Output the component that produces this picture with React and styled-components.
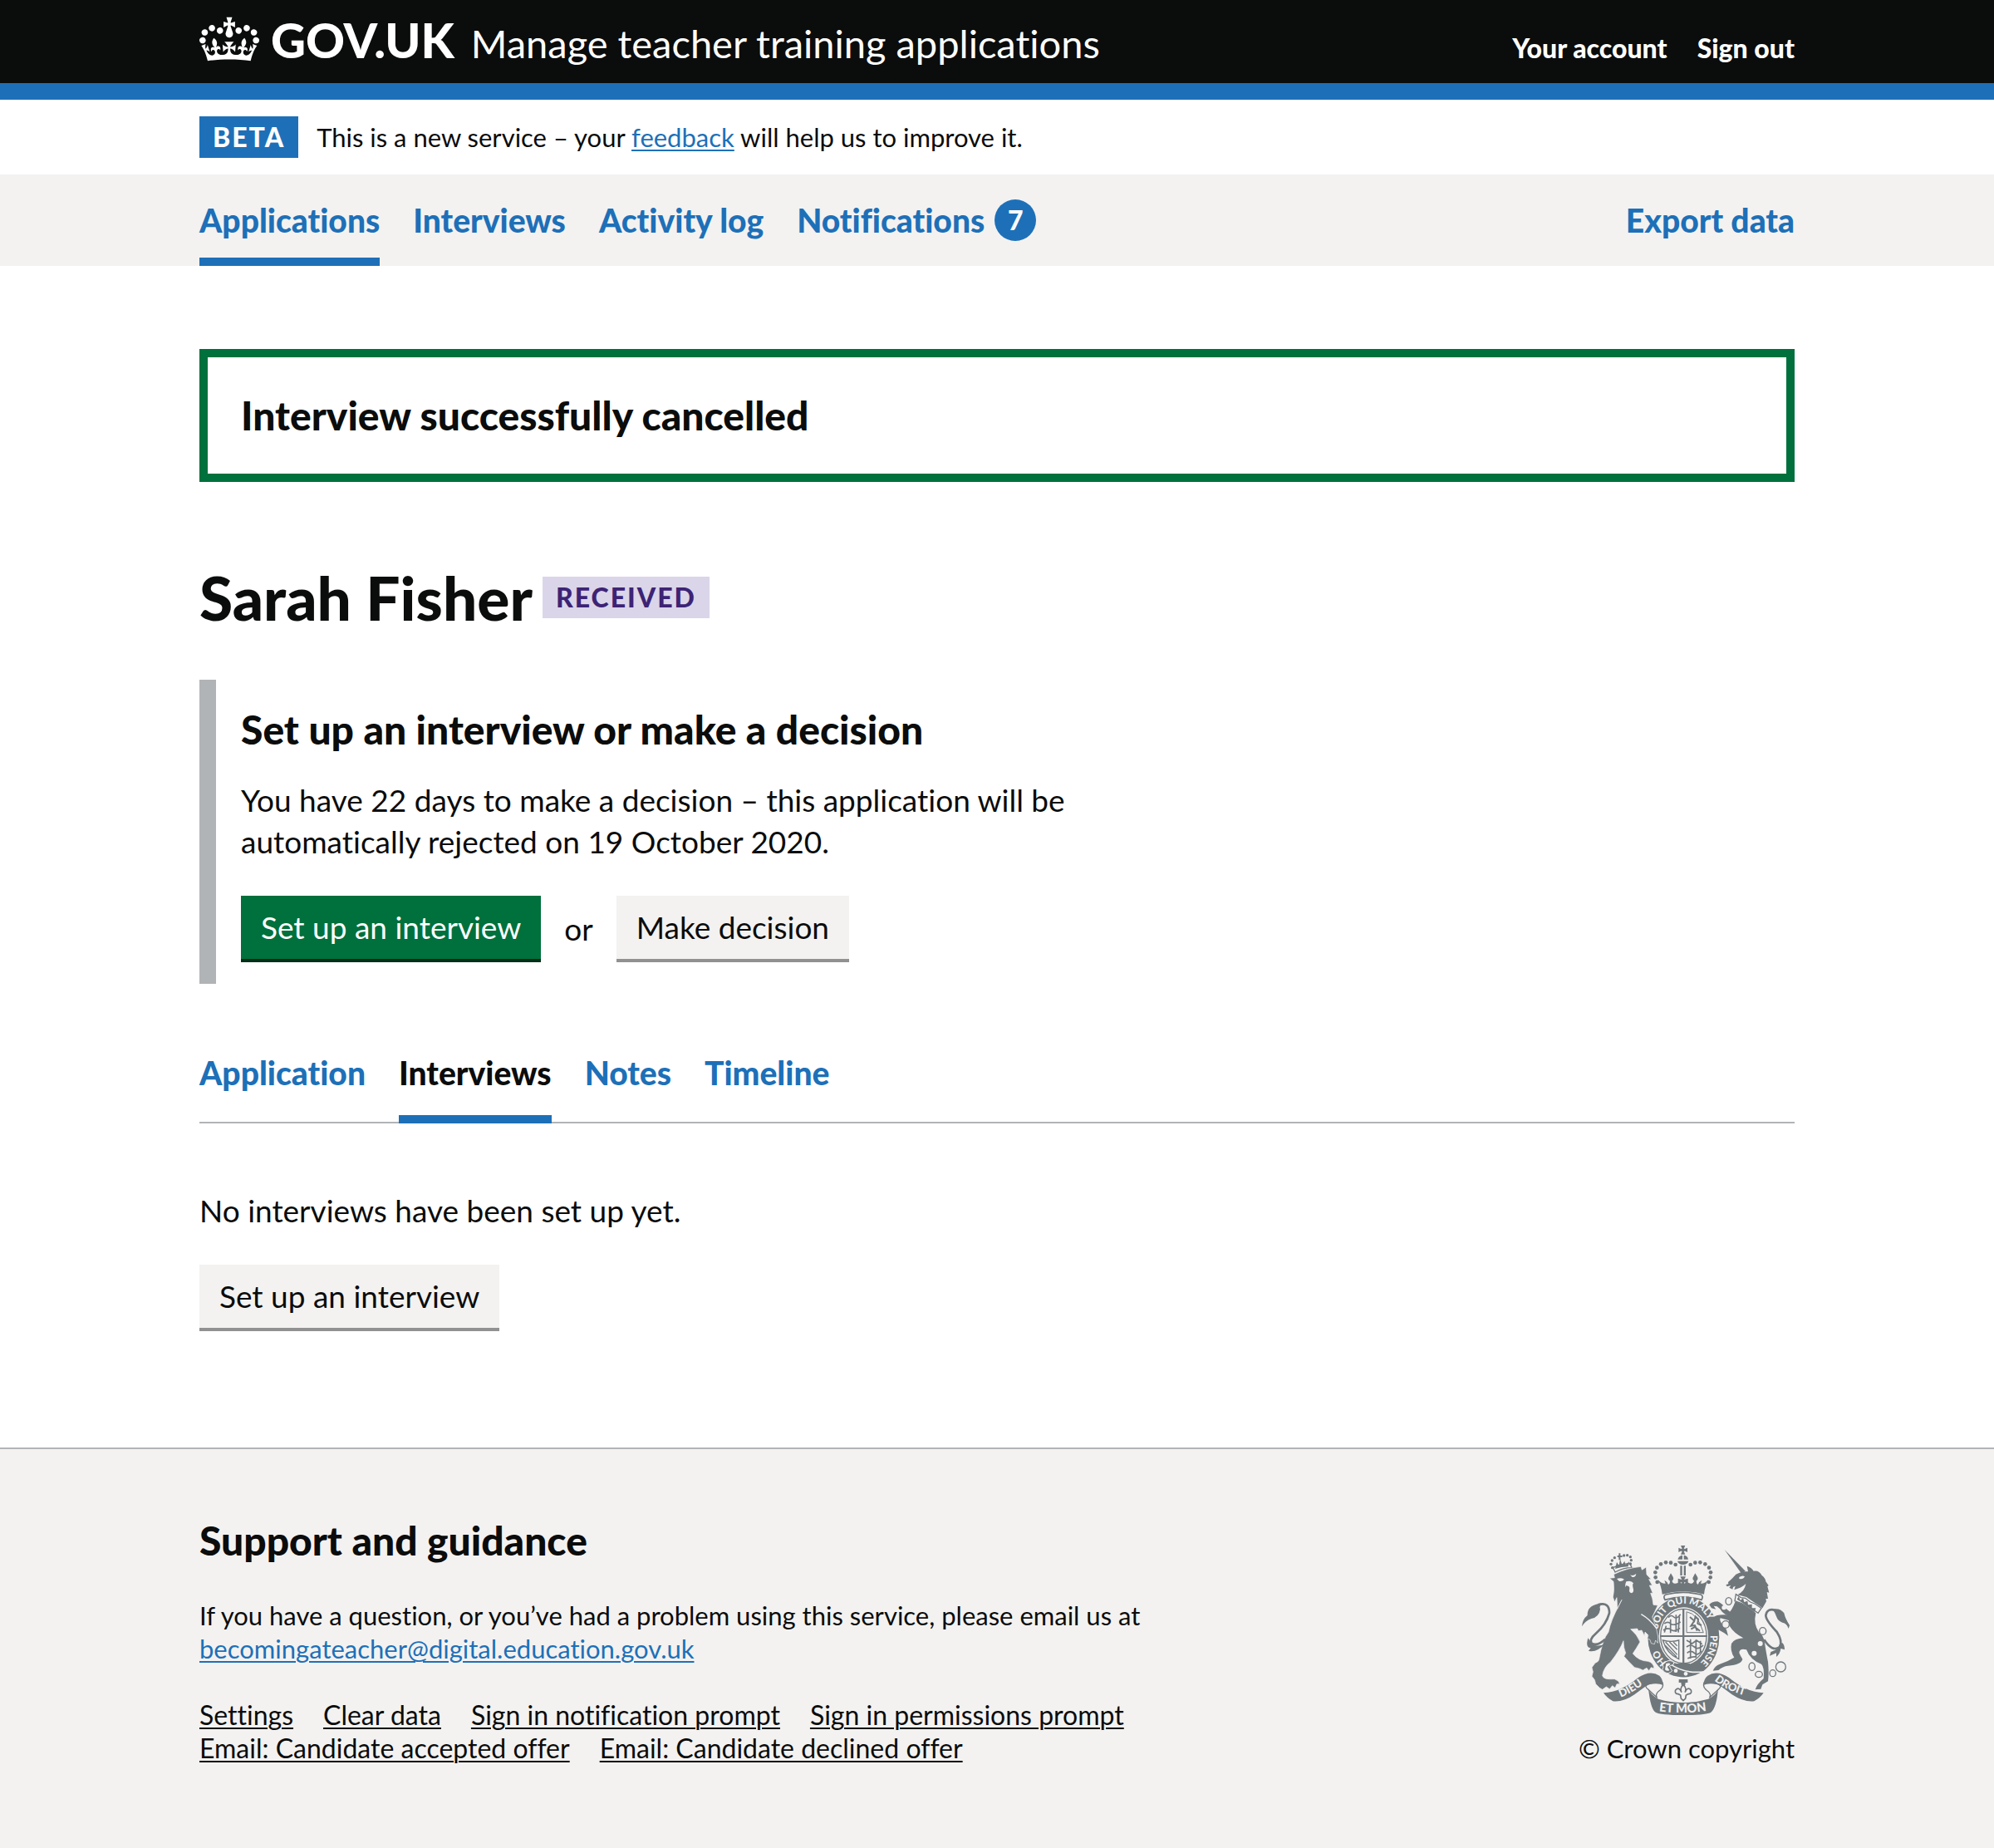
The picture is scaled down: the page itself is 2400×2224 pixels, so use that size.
import React from "react";
import styled, { createGlobalStyle, css } from "styled-components";

const c = {
  black: "#0b0c0c",
  blue: "#1d70b8",
  green: "#00703c",
  greenShadow: "#002d18",
  grey1: "#6f777b",
  grey2: "#b1b4b6",
  grey3: "#f3f2f1",
  buttonShadow: "#929191",
  purple: "#3d2375",
  purpleTint: "#dbd5e9",
  white: "#ffffff",
};

const small = css`
  font-size: 31px;
  line-height: 40px;
`;
const smallBold = css`
  font-size: 32px;
  line-height: 40px;
  font-weight: 900;
`;
const body = css`
  font-size: 37px;
  line-height: 50px;
`;
const bodyBold = css`
  font-size: 39px;
  line-height: 50px;
  font-weight: 900;
`;

const GlobalStyle = createGlobalStyle`
  *, *::before, *::after { box-sizing: border-box; }
  body {
    margin: 0;
    background: ${c.grey3};
    color: ${c.black};
    font-family: Lato, Roboto, "Liberation Sans", sans-serif;
    font-variant-ligatures: none;
  }
  h1, h2, p, ul { margin: 0; padding: 0; }
  ul { list-style: none; }
`;

const Page = styled.div`
  background: ${c.white};
`;

const Container = styled.div`
  max-width: 1920px;
  margin: 0 auto;
`;

const Header = styled.header`
  background: ${c.black};
  border-bottom: 20px solid ${c.blue};
`;

const HeaderRow = styled(Container)`
  display: flex;
  align-items: baseline;
  justify-content: space-between;
  height: 100px;
  padding-top: 10px;
`;

const Brand = styled.div`
  display: flex;
  align-items: baseline;
  gap: 20px;
`;

const LogoLink = styled.a`
  display: flex;
  align-items: baseline;
  gap: 14px;
  color: ${c.white};
  font-size: 58px;
  line-height: 76px;
  font-weight: 900;
  text-decoration: none;
`;

const Crown = styled.svg`
  width: 72px;
  height: 53px;
  margin-bottom: -4px;
  overflow: visible;
`;

const ServiceLink = styled.a`
  font-size: 47px;
  line-height: 60px;
  color: ${c.white};
  text-decoration: none;
`;

const AccountList = styled.ul`
  display: flex;
  gap: 36px;
`;

const AccountLink = styled.a`
  ${smallBold}
  color: ${c.white};
  text-decoration: none;
`;

const PhaseBanner = styled(Container)`
  display: flex;
  align-items: center;
  gap: 22px;
  padding: 20px 0;
`;

const Tag = styled.strong`
  display: inline-flex;
  align-items: center;
  justify-content: center;
  height: 50px;
  padding: 0 16px;
  background: ${(p) => p.$bg};
  color: ${(p) => p.$fg};
  ${smallBold}
  letter-spacing: 2px;
  text-transform: uppercase;
`;

const SmallText = styled.p`
  ${small}
`;

const Link = styled.a`
  color: ${(p) => (p.$dark ? c.black : c.blue)};
  text-decoration: underline;
  text-decoration-thickness: 2px;
  text-underline-offset: 3px;
`;

const PrimaryNav = styled.nav`
  background: ${c.grey3};
`;

const NavRow = styled(Container)`
  display: flex;
  justify-content: space-between;
`;

const NavList = styled.ul`
  display: flex;
  gap: 40px;
`;

const NavLink = styled.a`
  display: flex;
  align-items: center;
  gap: 12px;
  height: 110px;
  border-top: 10px solid transparent;
  border-bottom: 10px solid ${(p) => (p.$active ? c.blue : "transparent")};
  color: ${c.blue};
  ${bodyBold}
  text-decoration: none;
`;

const Count = styled.span`
  display: flex;
  align-items: center;
  justify-content: center;
  width: 50px;
  height: 50px;
  border-radius: 50%;
  background: ${c.blue};
  color: ${c.white};
  ${smallBold}
`;

const Main = styled.main`
  padding: 100px 0 140px;
`;

const SuccessBanner = styled.div`
  padding: 40px;
  border: 10px solid ${c.green};
`;

const Heading = styled.h2`
  font-size: 48px;
  line-height: 60px;
  font-weight: 900;
`;

const TitleRow = styled.div`
  display: flex;
  align-items: center;
  gap: 12px;
  margin: 100px 0 60px;
`;

const Title = styled.h1`
  font-size: 73px;
  line-height: 78px;
  font-weight: 900;
`;

const Inset = styled.section`
  max-width: 1140px;
  padding: 30px 30px 26px;
  border-left: 20px solid ${c.grey2};
`;

const Text = styled.p`
  ${body}
  margin: 30px 0 40px;
`;

const Actions = styled.div`
  display: flex;
  align-items: center;
  gap: 28px;
  ${body}
`;

const Button = styled.button`
  height: 80px;
  padding: 0 24px;
  border: 0;
  border-bottom: 4px solid ${(p) => (p.$primary ? c.greenShadow : c.buttonShadow)};
  background: ${(p) => (p.$primary ? c.green : c.grey3)};
  color: ${(p) => (p.$primary ? c.white : c.black)};
  font-family: inherit;
  font-variant-ligatures: none;
  ${body}
  cursor: pointer;
`;

const Tabs = styled.nav`
  margin: 70px 0 80px;
  box-shadow: inset 0 -2px 0 ${c.grey2};
`;

const TabLink = styled.a`
  display: block;
  height: 98px;
  padding-top: 12px;
  border-bottom: 10px solid ${(p) => (p.$active ? c.blue : "transparent")};
  color: ${(p) => (p.$active ? c.black : c.blue)};
  ${bodyBold}
  text-decoration: none;
`;

const Footer = styled.footer`
  border-top: 2px solid ${c.grey2};
  background: ${c.grey3};
`;

const FooterRow = styled(Container)`
  display: flex;
  align-items: flex-end;
  justify-content: space-between;
  padding: 80px 0 100px;
`;

const FooterText = styled.p`
  ${small}
  margin: 40px 0;
`;

const FooterLinks = styled.ul`
  display: flex;
  flex-wrap: wrap;
  column-gap: 36px;
  max-width: 1180px;
  font-size: 32px;
  line-height: 40px;
`;

const Copyright = styled.a`
  display: flex;
  flex-direction: column;
  align-items: flex-end;
  gap: 20px;
  ${small}
  color: ${c.black};
  text-decoration: none;
`;

const Arms = styled.svg`
  width: 250px;
  height: 204px;
  margin-right: 6px;
`;

const CROWN_PATH =
  "M25 30.2c3.5 1.5 7.7-.2 9.1-3.7 1.5-3.6-.2-7.8-3.9-9.2-3.6-1.4-7.6.3-9.1 3.9-1.4 3.5.3 7.5 3.9 9zM9 39.5c3.6 1.5 7.8-.2 9.2-3.7 1.5-3.6-.2-7.8-3.9-9.1-3.6-1.5-7.6.2-9.1 3.8-1.4 3.5.3 7.5 3.8 9zM4.4 57.2c3.5 1.5 7.7-.2 9.1-3.8 1.5-3.6-.2-7.7-3.9-9.1-3.5-1.5-7.6.3-9.1 3.8-1.4 3.5.3 7.6 3.9 9.1zm38.3-21.4c3.5 1.5 7.7-.2 9.1-3.8 1.5-3.6-.2-7.7-3.9-9.1-3.6-1.5-7.6.3-9.1 3.8-1.3 3.6.4 7.7 3.9 9.1zm64.4-5.6c-3.6 1.5-7.8-.2-9.1-3.7-1.5-3.6.2-7.8 3.8-9.2 3.6-1.4 7.7.3 9.2 3.9 1.3 3.5-.4 7.5-3.9 9zm15.9 9.3c-3.6 1.5-7.7-.2-9.1-3.7-1.5-3.6.2-7.8 3.7-9.1 3.6-1.5 7.7.2 9.2 3.8 1.5 3.5-.3 7.5-3.8 9zm4.7 17.7c-3.6 1.5-7.8-.2-9.2-3.8-1.5-3.6.2-7.7 3.9-9.1 3.6-1.5 7.7.3 9.2 3.8 1.3 3.5-.4 7.6-3.9 9.1zM89.3 35.8c-3.6 1.5-7.8-.2-9.2-3.8-1.4-3.6.2-7.7 3.9-9.1 3.6-1.5 7.7.3 9.2 3.8 1.4 3.6-.3 7.7-3.9 9.1zM69.7 17.7l8.9 4.7V9.3l-8.9 2.8c-.2-.3-.5-.6-.9-.9L72.4 0H59.6l3.5 11.2c-.3.3-.6.5-.9.9l-8.8-2.8v13.1l8.8-4.7c.3.3.6.7.9.9l-5 15.4v.1c-.2.8-.4 1.6-.4 2.4 0 4.1 3.1 7.5 7 8.1h.2c.3 0 .7.1 1 .1.4 0 .7 0 1-.1h.2c4-.6 7.1-4.1 7.1-8.1 0-.8-.1-1.7-.4-2.4V34l-5.1-15.4c.4-.2.7-.6 1-.9zM66 92.8c16.9 0 32.8 1.1 47.1 3.2 4-16.9 8.9-26.7 14-33.5l-9.6-3.4c1 4.9 1.1 7.2 0 10.2-1.5-1.4-3-4.3-4.2-8.7L108.6 76c2.8-2 5-3.2 7.5-3.3-4.4 9.4-10 11.9-13.6 11.2-4.3-.8-6.3-4.6-5.6-7.9 1-4.7 5.7-5.9 8-.5 4.3-8.7-3-11.4-7.6-8.8 7.1-7.2 7.9-13.5 2.1-21.1-8 6.1-8.1 12.3-4.5 20.8-4.7-5.4-12.1-2.5-9.5 6.2 3.4-5.2 7.9-2 7.2 3.1-.6 4.3-6.4 7.8-13.5 7.2-10.3-.9-10.9-8-11.2-13.8 2.5-.5 7.1 1.8 11 7.3L80.2 60c-4.1 4.4-8 5.3-12.3 5.4 1.4-4.4 8-11.6 8-11.6H55.5s6.4 7.2 7.9 11.6c-4.2-.1-8-1-12.3-5.4l1.4 16.4c3.9-5.5 8.5-7.7 10.9-7.3-.3 5.8-.9 12.8-11.1 13.8-7.2.6-12.9-2.9-13.5-7.2-.7-5 3.8-8.3 7.1-3.1 2.7-8.7-4.6-11.6-9.4-6.2 3.7-8.5 3.6-14.7-4.6-20.8-5.8 7.6-5 13.9 2.2 21.1-4.7-2.6-11.9.1-7.7 8.8 2.3-5.5 7.1-4.2 8.1.5.7 3.3-1.3 7.1-5.7 7.9-3.5.7-9-1.8-13.5-11.2 2.5.1 4.7 1.3 7.5 3.3l-4.7-15.4c-1.2 4.4-2.7 7.2-4.3 8.7-1.1-3-.9-5.3 0-10.2l-9.5 3.4c5 6.9 9.9 16.7 14 33.5 14.8-2.1 30.8-3.2 47.7-3.2z";

const crownBeads = [
  [344, 192], [338, 175], [337, 157], [343, 140], [357, 127], [375, 121], [393, 122], [410, 129],
  [530, 192], [536, 175], [537, 157], [531, 140], [517, 127], [499, 121], [481, 122], [464, 129],
];

const lionBeads = [
  [182, 140], [177, 127], [181, 114], [190, 104], [224, 96], [236, 95], [247, 101], [250, 113], [247, 126],
];

const chainLinks = [
  [602, 261, 11, 13], [591, 345, 13, 13], [725, 369, 12, 13], [686, 497, 11, 14],
  [711, 525, 13, 11], [761, 521, 11, 12], [790, 498, 18, 18],
];

function RoyalArms() {
  const dark = c.grey1;
  const light = c.grey3;
  return (
    <Arms viewBox="72 60 750 612" aria-hidden="true" fill={dark}>
      <defs>
        <path id="garterTop" d="M346 362A98 113 0 0 1 540 372" />
        <path id="garterRight" d="M536 384A98 113 0 0 1 480 496" />
        <path id="garterLeft" d="M378 482A98 113 0 0 1 341 400" />
        <path id="dieuLine" d="M212 608Q260 590 314 546" />
        <path id="droitLine" d="M550 547Q598 588 686 608" />
        <path id="monLine" d="M350 658Q438 670 528 656" />
      </defs>

      {/* imperial crown */}
      <path d="M429 60h16l-5 11h-6zM429 92h16l-5-11h-6zM421 68v16l11-5v-6zM453 68v16l-11-5v-6zM432 71h10v10h-10z" />
      <path d="M418 110q4-14 17-15v15zM440 95q14 1 16 15h-16zM417 116h40q-3 12-20 13-17-1-20-13z" />
      {crownBeads.map(([x, y]) => (
        <circle key={`${x}-${y}`} cx={x} cy={y} r="7" />
      ))}
      <path d="M427 133h7v35h-7zM440 133h7v35h-7z" />
      <path d="M427 172h20l-6 11 14-4v18l-14-5 3 14h-14l3-14-14 5v-18l14 4z" />
      <path d="M362 236q-3-30-16-54 12 16 28 15l-4-12q11 5 14 16 8-4 5-14-8-5-3-14l7-13 8 13q4 9-3 14 0 11 12 10 14-3 14-6l13 10 14-10q2 3 14 6 10 1 12-10-8-5-3-14l7-13 8 13q4 9-3 14-2 10 5 14 3-11 14-16l-4 12q16 1 28-15-13 24-16 54-74-20-150 0z" />
      <path d="M372 256q-8-14 3-19 62-16 126 0 11 5 3 19-66-20-132 0z" fill={light} stroke={dark} strokeWidth="5" />

      {/* garter and shield */}
      <ellipse cx="439" cy="391" rx="129" ry="147" />
      <ellipse cx="439" cy="387" rx="89" ry="104" fill={light} />
      <ellipse cx="439" cy="387" rx="83" ry="98" fill="none" stroke={dark} strokeWidth="4" />
      <path d="M435 288h7v200h-7zM354 384h170v6H354zM412 486h50l4 12h-58z" />
      <g fill="none" stroke={dark} strokeWidth="5">
        <path d="M384 320q10-12 20-2t24-10M370 342q12-10 22 0t36-6M366 366q16-12 28-2t32-6M392 326v50M412 310v62M376 350l-6 24M424 316l-4 58" />
        <path d="M450 298v76h62M452 300q38 6 58 72" strokeWidth="3" />
        <path d="M462 318l16 14 4-16 10 10-2 16 14 6M478 332l-12 18 14-2 8 20M466 362l14-8 18 14" strokeWidth="6" />
        <path d="M450 402l20 12 16-12 20 14M450 426q14-12 28 0t32-6M452 448q14-12 26 0t26-8M454 468q12-8 30-6M464 398v70M484 400v66M500 404v44" />
        <path d="M364 402q30 8 58 0v68q-44-20-58-68zM374 408l42 46M388 408l28 28M372 420l42 42M402 408l14 14" strokeWidth="4" />
      </g>
      <path d="M386 484q54 40 124 32-44 28-92 20-34-6-50-22 14-8 18-30z" stroke={light} strokeWidth="5" />
      <path d="M384 476q20-2 20 12l-16 8 10 16q-12 14-26 6-14-10-6-18-8-18 18-24z" stroke={light} strokeWidth="3" />
      <path d="M376 486q12-4 16 2l-12 10 8 12q-8 6-16-2z" fill={light} />
      <circle cx="411" cy="512" r="7" fill={light} />
      <circle cx="447" cy="523" r="7" fill={light} />
      <g fill={light} fontFamily="Lato, sans-serif" fontWeight="900" fontSize="35">
        <text><textPath href="#garterTop">SOIT QUI MALY</textPath></text>
        <text><textPath href="#garterRight">PENSE</textPath></text>
        <text><textPath href="#garterLeft">HO</textPath></text>
      </g>

      {/* lion */}
      <path d="M192 156l-8-16q32-16 62-14l6 14q-30 0-60 16z" fill={light} stroke={dark} strokeWidth="4" />
      <path d="M192 144l6-24 8 12 4-24 7 22 9-14 3 14 14-12-4 18q-24 0-47 8z" />
      <path d="M200 96h5v-8h6v8h7v6h-7v10h-6v-10h-5z" />
      {lionBeads.map(([x, y]) => (
        <circle key={`${x}-${y}`} cx={x} cy={y} r="5" />
      ))}
      <path
        d="M172 178L190 176L187 164Q232 142 285 136L289 148L304 138L306 165L322 182L314 182L326 204L316 204L328 232L320 232Q328 250 330 274L346 276L326 318Q342 350 347 390L346 412L338 402L334 416L322 413L318 400L308 396L312 384L300 372L298 386L288 366L276 368L272 360L248 362Q272 382 282 408Q268 432 256 450Q276 476 310 478Q330 482 333 504L322 500L314 512L306 502L292 510Q284 504 262 500L240 478L224 460L230 448Q222 430 222 404Q210 436 176 480Q150 500 146 530Q150 545 190 542Q208 548 208 560L198 560L192 574L182 566L172 578L160 570L146 580L136 574L122 560L118 545L108 532L112 516L108 500L120 484Q134 478 134 470Q146 400 168 372Q176 330 208 272L216 256L200 288L198 248L190 264L184 246Q190 222 186 190Z"
        stroke={light}
        strokeWidth="2"
      />
      <path d="M198 180q14-5 27 2-10 10-19 6zM246 166q10 6 22-4-2 14-14 12zM232 190q18-6 26 6-6 6-2 14 6 18-4 22-12-2-8-16 2-10-14-12 4 2-2 6 0-12 4-20z" fill={light} />
      <path d="M286 308q32 18 56 52" fill="none" stroke={light} strokeWidth="4" />
      <path d="M130 274Q172 262 171 304Q160 345 122 378Q96 400 108 414Q128 424 156 398" fill="none" stroke={dark} strokeWidth="8" />
      <path d="M72 352Q74 326 92 312Q90 272 150 268Q132 278 138 290Q134 318 106 324Q84 332 72 352Z" />
      <path d="M94 394Q84 430 104 430L96 440Q124 448 154 416Q120 430 104 408Z" />

      {/* unicorn */}
      <path d="M587 75L663 153L647 160Z" />
      <path d="M602 206l-2-14q20-18 28-28 24-12 44-10l-4-20q16 4 24 18 20-4 30 16 12 8 14 22l10 14-4 4 6 22-8-2 4 24-8 0 2 10-14 24-58-40-32-8q26-14 30-40-14 14-42 22l4-14-8 4-2 8-12-6 6-8-14 4-4-6 10-4z" />
      <path d="M640 174q12-8 20-2-6 12-20 8z" fill={light} />
      <path d="M626 262Q670 276 700 304Q690 345 712 374Q728 384 732 410Q736 440 744 480Q748 520 744 550L724 562L718 578L698 580Q704 560 728 540Q732 500 720 488Q680 474 666 436Q640 430 640 448Q646 462 652 470Q648 490 600 494Q580 496 565 510L545 512Q552 494 570 488Q600 478 622 464Q606 440 612 414Q622 396 655 394Q620 376 606 352Q600 340 602 330L572 322Q566 330 584 352L594 364L600 386L586 376L562 362Q548 340 546 320Q556 308 596 310Q614 296 626 262Z" />
      <path d="M532 274Q540 262 562 262Q580 270 588 284L608 300L600 312Q580 306 572 290L560 280L548 278L556 290L540 286Z" />
      <path d="M628 236l18 12 16 2 18 14 16 6 24 16-12 18q-40-30-84-44z" fill={light} stroke={dark} strokeWidth="4" />
      <path d="M632 254l6-10 6 14 10-8 4 14 12-4 2 14 14-2 0 14 14 0-4 14q-30-26-64-46z" />
      <path d="M730 400Q760 446 786 426Q798 406 776 372Q736 330 736 312Q740 284 772 294" fill="none" stroke={dark} strokeWidth="8" />
      <path d="M760 290q28-6 42 14 4 20 20 44-2 6-4 12-6-20-22-22-16-4-22-22-4-14-14-26zM794 410q10 6 10 26l-14-4q-2 18-16 30l0-14-24 10 4-14q30-10 40-34z" />
      {chainLinks.map(([x, y, rx, ry]) => (
        <ellipse key={`${x}-${y}`} cx={x} cy={y} rx={rx} ry={ry} fill={light} stroke={dark} strokeWidth="4" />
      ))}
      <circle cx="716" cy="414" r="9" fill={light} />
      <circle cx="694" cy="449" r="9" fill={light} />
      <circle cx="585" cy="284" r="8" fill={light} />

      {/* motto scroll */}
      <path d="M310 578q-16-12 4-18 20-8 48-6 8 16-8 28-20 14-10 28zM566 578q14-12-4-18-20-8-48-6-8 16 8 28 20 14 10 28z" fill={light} stroke={dark} strokeWidth="4" />
      <path d="M150 592Q212 590 274 538Q318 508 352 530Q362 538 366 564Q344 554 314 562Q298 570 262 598Q222 626 184 622Q162 610 150 592ZM728 592Q666 590 604 538Q560 508 526 530Q514 538 510 564Q532 554 562 562Q578 570 614 598Q656 626 694 622Q716 610 728 592Z" />
      <path d="M312 576q8 24 36 38 90 26 180 0 30-14 36-38-6 70-26 86-16 10-100 10t-100-10q-18-10-26-86z" />
      <g fill={light} fontFamily="Lato, sans-serif" fontWeight="900" fontSize="39">
        <text><textPath href="#dieuLine">DIEU</textPath></text>
        <text><textPath href="#droitLine">DROIT</textPath></text>
        <text fontSize="44"><textPath href="#monLine">ET MON</textPath></text>
      </g>
      <path d="M422 543h32v12h-8l-2 12h-12l-2-12h-8z" />
      <path d="M438 562q14 14 6 28 10-22 22-8 4 14-10 14l-8 4-2 12-8 8-8-8-2-12-8-4q-14 0-10-14 12-14 22 8-8-14 6-28z" fill={light} stroke={dark} strokeWidth="5" />
    </Arms>
  );
}

const primaryItems = [
  { label: "Applications", active: true },
  { label: "Interviews" },
  { label: "Activity log" },
  { label: "Notifications", count: 7 },
];

const tabs = ["Application", "Interviews", "Notes", "Timeline"];

const footerLinks = [
  "Settings",
  "Clear data",
  "Sign in notification prompt",
  "Sign in permissions prompt",
  "Email: Candidate accepted offer",
  "Email: Candidate declined offer",
];

export default function App() {
  return (
    <Page>
      <GlobalStyle />
      <Header>
        <HeaderRow>
          <Brand>
            <LogoLink href="#home">
              <Crown viewBox="0 -7 132 97" aria-hidden="true">
                <path fill="currentColor" fillRule="evenodd" d={CROWN_PATH} />
              </Crown>
              GOV.UK
            </LogoLink>
            <ServiceLink href="#service">Manage teacher training applications</ServiceLink>
          </Brand>
          <AccountList>
            <li><AccountLink href="#account">Your account</AccountLink></li>
            <li><AccountLink href="#sign-out">Sign out</AccountLink></li>
          </AccountList>
        </HeaderRow>
      </Header>

      <PhaseBanner>
        <Tag $bg={c.blue} $fg={c.white}>Beta</Tag>
        <SmallText>
          This is a new service – your <Link href="#feedback">feedback</Link> will help us to improve it.
        </SmallText>
      </PhaseBanner>

      <PrimaryNav aria-label="Primary">
        <NavRow>
          <NavList>
            {primaryItems.map(({ label, active, count }) => (
              <li key={label}>
                <NavLink href={`#${label}`} $active={active}>
                  {label}
                  {count && <Count>{count}</Count>}
                </NavLink>
              </li>
            ))}
          </NavList>
          <NavLink href="#export">Export data</NavLink>
        </NavRow>
      </PrimaryNav>

      <Container>
        <Main>
          <SuccessBanner role="alert">
            <Heading>Interview successfully cancelled</Heading>
          </SuccessBanner>

          <TitleRow>
            <Title>Sarah Fisher</Title>
            <Tag $bg={c.purpleTint} $fg={c.purple}>Received</Tag>
          </TitleRow>

          <Inset>
            <Heading>Set up an interview or make a decision</Heading>
            <Text>
              You have 22 days to make a decision – this application will be automatically rejected on 19 October 2020.
            </Text>
            <Actions>
              <Button $primary type="button">Set up an interview</Button>
              or
              <Button type="button">Make decision</Button>
            </Actions>
          </Inset>

          <Tabs aria-label="Application sections">
            <NavList>
              {tabs.map((label) => (
                <li key={label}>
                  <TabLink href={`#tab-${label}`} $active={label === "Interviews"}>{label}</TabLink>
                </li>
              ))}
            </NavList>
          </Tabs>

          <Text>No interviews have been set up yet.</Text>
          <Button type="button">Set up an interview</Button>
        </Main>
      </Container>

      <Footer>
        <FooterRow>
          <div>
            <Heading>Support and guidance</Heading>
            <FooterText>
              If you have a question, or you’ve had a problem using this service, please email us at
              <br />
              <Link href="mailto:becomingateacher@digital.education.gov.uk">
                becomingateacher@digital.education.gov.uk
              </Link>
            </FooterText>
            <FooterLinks>
              {footerLinks.map((label) => (
                <li key={label}><Link $dark href="#footer">{label}</Link></li>
              ))}
            </FooterLinks>
          </div>
          <Copyright href="#copyright">
            <RoyalArms />
            © Crown copyright
          </Copyright>
        </FooterRow>
      </Footer>
    </Page>
  );
}
